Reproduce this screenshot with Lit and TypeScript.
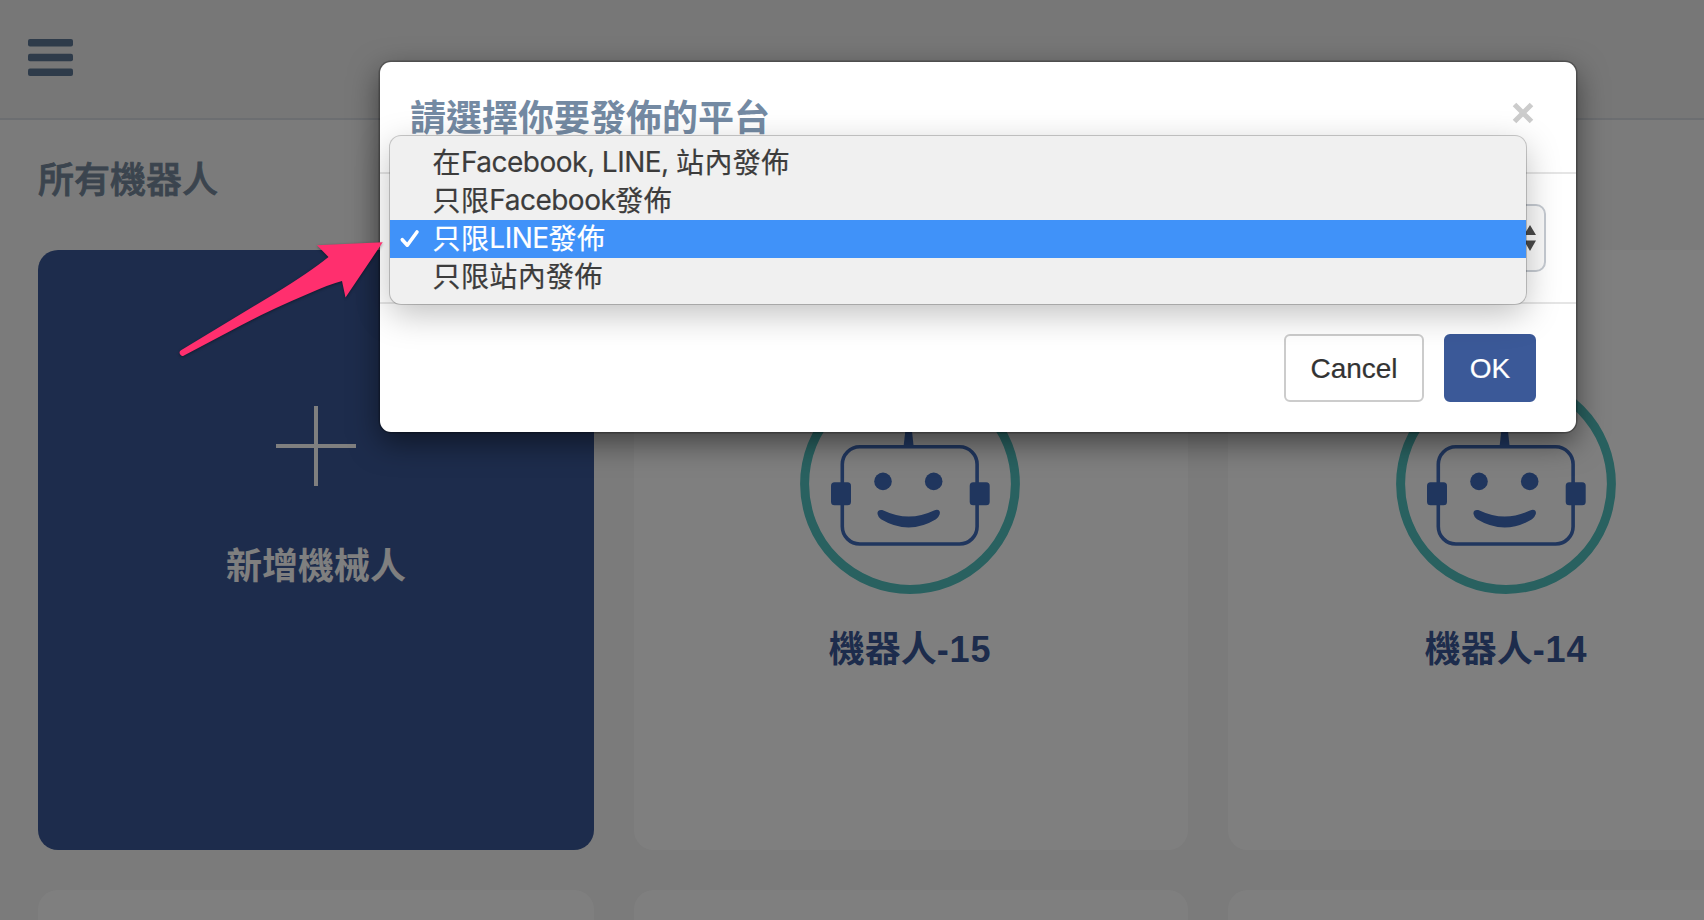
import { LitElement, html, css, svg } from "lit";
import { customElement, property, state } from "lit/decorators.js";

const FONT = css`"Liberation Sans", "Noto Sans CJK TC", sans-serif`;

@customElement("robot-avatar")
class RobotAvatar extends LitElement {
  static styles = css`
    :host { display: block; width: 220px; height: 220px; }
    svg { display: block; }
  `;
  render() {
    return html`<svg width="220" height="220" viewBox="0 0 220 220">
      <circle cx="110" cy="110" r="105.4" fill="none" stroke="#52c2c0" stroke-width="9" />
      <g fill="#406cbc">
        <circle cx="108.7" cy="38" r="7" />
        <path d="M106.8 44H110.6L113.7 73H103.5Z" />
        <rect x="42.3" y="72.8" width="134.8" height="97.2" rx="17.5" fill="none" stroke="#406cbc" stroke-width="3.6" />
        <rect x="31" y="108.3" width="20" height="23" rx="3.5" />
        <rect x="169.7" y="108.3" width="20" height="23" rx="3.5" />
        <circle cx="83" cy="107.4" r="8.8" />
        <circle cx="133.7" cy="107.4" r="8.8" />
        <path d="M77.5 140C77 136.500 80 135.300 83.500 136.500Q108.700 148.500 134 136.500C138 134.800 140.800 136.500 139.700 140.300Q138.500 143.700 136 145.300Q108.700 161.800 81 145.300Q78.300 143.500 77.500 140Z" />
      </g>
    </svg>`;
  }
}

@customElement("robot-card")
class RobotCard extends LitElement {
  @property() name = "";
  static styles = css`
    :host { display: block; height: 600px; border-radius: 20px; background: #fff; font-family: ${FONT}; }
    .body { display: flex; flex-direction: column; align-items: center; padding-top: 124px; }
    .name { margin-top: 30px; font-size: 36px; line-height: 52px; font-weight: 700; color: #3b5998; white-space: nowrap; }
    .num { letter-spacing: 0.8px; }
  `;
  render() {
    if (!this.name) return html``;
    const [label, num] = this.name.split("-");
    return html`<div class="body">
      <robot-avatar></robot-avatar>
      <div class="name">${label}<span class="num">-${num}</span></div>
    </div>`;
  }
}

@customElement("platform-dialog")
class PlatformDialog extends LitElement {
  @state() selected = 2;
  private options = [
    ["在", "Facebook, LINE, ", "站內發佈"],
    ["只限", "Facebook", "發佈"],
    ["只限", "LINE", "發佈"],
    ["只限站內發佈", "", ""],
  ];
  static styles = css`
    :host {
      display: block; box-sizing: border-box; position: relative; width: 1196px; height: 370px;
      border-radius: 11px; background: #fff; font-family: ${FONT};
      box-shadow: 0 0 0 1.5px rgba(0, 0, 0, 0.25), 0 10px 30px rgba(0, 0, 0, 0.5);
    }
    .head {
      box-sizing: border-box; height: 112px; padding: 31px 42px 0 30px; display: flex;
      justify-content: space-between; align-items: flex-start; border-bottom: 2px solid #e5e5e5;
    }
    .title { font-size: 36px; line-height: 52px; font-weight: 700; color: #748aa3; }
    .close { display: block; margin-top: 9px; }
    .body { box-sizing: border-box; height: 130px; padding: 30px; border-bottom: 2px solid #e5e5e5; }
    .select {
      box-sizing: border-box; height: 68px; border: 2px solid #c6cbd2; border-radius: 10px;
      background: #fafafa; display: flex; justify-content: flex-end; align-items: center; padding-right: 8px;
    }
    .foot { display: flex; justify-content: flex-end; gap: 20px; padding: 30px 40px 0 0; }
    .btn {
      box-sizing: border-box; height: 68px; border-radius: 6px; border: 2px solid #ccc; background: #fff;
      color: #333; font: 28px/64px ${FONT}; padding: 1px 0 0; text-align: center; width: 140px;
      -webkit-text-stroke: 0.2px currentColor;
    }
    .ok { width: 92px; background: #3b5998; border-color: #3b5998; color: #fff; }
    .menu {
      position: absolute; left: 10px; top: 74px; width: 1136px; box-sizing: border-box; padding: 8px 0;
      border-radius: 11px; background: #f0f0f0;
      box-shadow: 0 0 0 1px rgba(0, 0, 0, 0.2), 0 10px 34px rgba(0, 0, 0, 0.25);
    }
    .item {
      display: flex; align-items: center; height: 38px; color: #3c3c3c; white-space: pre;
      font: 28px/38px Inter, "Noto Sans CJK TC", sans-serif; letter-spacing: 0.4px;
      -webkit-text-stroke: 0.2px currentColor;
    }
    .item.on { background: #4092f9; color: #fff; }
    .tick { width: 42.5px; height: 38px; flex: none; }
    .item span { margin-top: -1px; }
    .item .latin { letter-spacing: -0.5px; margin-top: -2px; }
  `;
  render() {
    return html`
      <div class="head">
        <div class="title">請選擇你要發佈的平台</div>
        <svg class="close" width="22" height="22" viewBox="0 0 22 22">
          <path d="M2.5 2.5L19.5 19.5M19.5 2.5L2.5 19.5" stroke="#ccc" stroke-width="5" />
        </svg>
      </div>
      <div class="body">
        <div class="select">
          <svg width="12" height="26" viewBox="0 0 12 26">
            <path d="M6 0L12 10H0ZM6 26L12 15.5H0Z" fill="#4a4a4a" />
          </svg>
        </div>
      </div>
      <div class="foot">
        <button class="btn">Cancel</button>
        <button class="btn ok">OK</button>
      </div>
      <div class="menu">
        ${this.options.map(
          ([a, b, c], i) => html`<div class="item ${i === this.selected ? "on" : ""}" @click=${() => (this.selected = i)}>
            <svg class="tick" viewBox="0 0 42.5 38">
              ${i === this.selected
                ? svg`<path d="M12.3 19.7L17.3 25.2L27 12" fill="none" stroke="#fff" stroke-width="3.6" stroke-linecap="round" stroke-linejoin="round"/>`
                : ""}
            </svg><span>${a}</span><span class="latin">${b}</span><span>${c}</span>
          </div>`
        )}
      </div>
    `;
  }
}

@customElement("app-root")
class AppRoot extends LitElement {
  private robots = ["機器人-15", "機器人-14", "", "", ""];
  static styles = css`
    :host {
      display: block; position: relative; width: 1704px; height: 920px; overflow: hidden;
      background: #f7f7f7; font-family: ${FONT};
    }
    .bar {
      box-sizing: border-box; height: 120px; background: #eee; border-bottom: 2px solid #d8dde3;
      padding: 39px 28px;
    }
    .burger { display: block; }
    .heading {
      padding: 35px 38px 0; height: 95px; font-size: 36px; line-height: 52px; font-weight: 500;
      color: #76899c; -webkit-text-stroke: 0.8px currentColor;
    }
    .grid { display: grid; grid-template-columns: 556px 554px 556px; column-gap: 40px; row-gap: 40px; padding-left: 38px; width: max-content; }
    robot-card:nth-child(3n + 2) { box-sizing: border-box; padding-right: 2px; }
    .add {
      height: 600px; border-radius: 20px; background: #3b5998; color: #fff;
      display: flex; flex-direction: column; align-items: center; box-sizing: border-box; padding-top: 156px;
    }
    .add-label { margin-top: 55px; font-size: 36px; line-height: 52px; font-weight: 700; }
    .backdrop {
      position: absolute; inset: 0; background: rgba(0, 0, 0, 0.5);
      display: flex; align-items: flex-start; padding: 62px 0 0 380px;
    }
    .pointer { position: absolute; left: 160px; top: 220px; filter: drop-shadow(0 1px 1.5px rgba(0, 0, 0, 0.4)); }
  `;
  render() {
    return html`
      <div class="bar">
        <svg class="burger" width="45" height="38" viewBox="0 0 45 38" fill="#5c7694">
          <rect width="45" height="7.4" rx="2" />
          <rect y="14.8" width="45" height="7.4" rx="2" />
          <rect y="29.6" width="45" height="7.4" rx="2" />
        </svg>
      </div>
      <div class="heading">所有機器人</div>
      <div class="grid">
        <div class="add">
          <svg width="80" height="80" viewBox="0 0 80 80"><path d="M38 0H42V38H80V42H42V80H38V42H0V38H38Z" fill="#fff" /></svg>
          <div class="add-label">新增機械人</div>
        </div>
        ${this.robots.map((n) => html`<robot-card .name=${n}></robot-card>`)}
      </div>
      <div class="backdrop"><platform-dialog></platform-dialog></div>
      <svg class="pointer" width="240" height="150" viewBox="0 0 240 150">
        <path d="M222.7 22.3L157 25.3L168.5 37Q150 52 115 73.5L21 130.3A3 3 0 0 0 24.5 135.3L81.7 105Q110 90 148.3 73.8Q170 64 182 61L185.5 77.5Z" fill="#ff2f6e" />
      </svg>
    `;
  }
}
